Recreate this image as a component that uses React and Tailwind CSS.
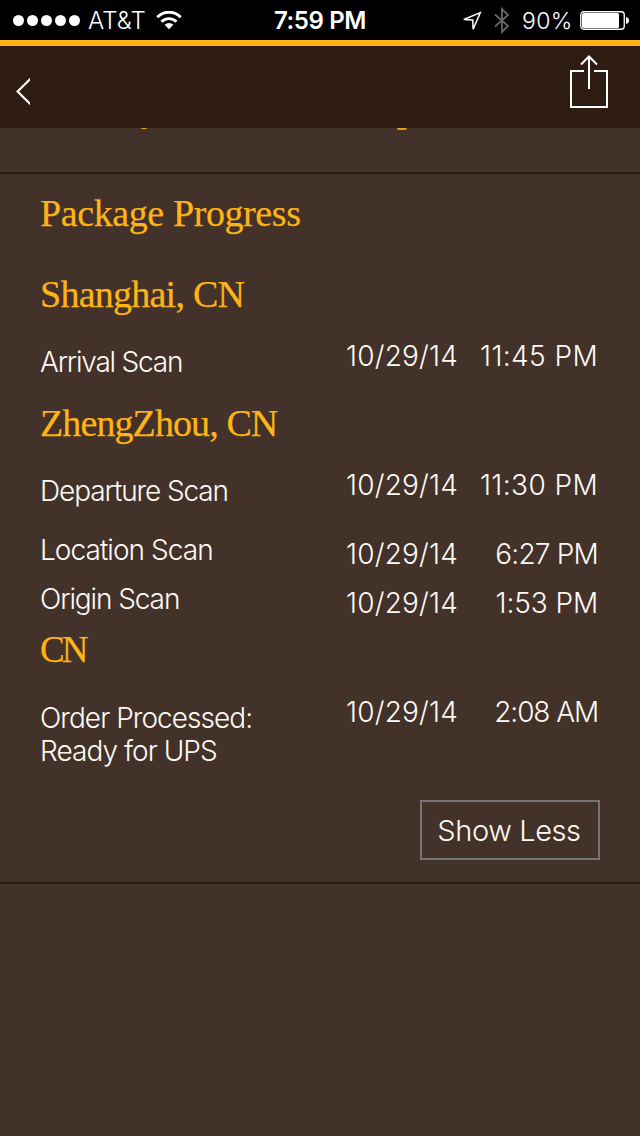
const stops = [
  {
    place: 'Shanghai, CN',
    heading: 'text-[38px] tracking-[-0.75px]',
    scans: [
      {
        label: 'Arrival Scan',
        date: '10/29/14',
        time: '11:45 PM',
        row: 'h-[65px]',
        labelPad: 'pt-1.5 tracking-[-1.2px]',
        datePad: '',
        timeTracking: 'tracking-[0.4px]',
      },
    ],
  },
  {
    place: 'ZhengZhou, CN',
    heading: 'text-[38px] tracking-[-0.9px]',
    scans: [
      {
        label: 'Departure Scan',
        date: '10/29/14',
        time: '11:30 PM',
        row: 'h-[65px]',
        labelPad: 'pt-1.5 tracking-[-1.1px]',
        datePad: '',
        timeTracking: 'tracking-[0.4px]',
      },
      {
        label: 'Location Scan',
        date: '10/29/14',
        time: '6:27 PM',
        row: 'h-[49px]',
        labelPad: 'tracking-[-0.95px]',
        datePad: 'pt-1',
        timeTracking: 'tracking-[-0.8px]',
      },
      {
        label: 'Origin Scan',
        date: '10/29/14',
        time: '1:53 PM',
        row: 'h-[49px]',
        labelPad: 'tracking-[-1.1px]',
        datePad: 'pt-1',
        timeTracking: 'tracking-[-0.1px]',
      },
    ],
  },
  {
    place: 'CN',
    heading: 'text-[37px] tracking-[-3px]',
    scans: [
      {
        label: 'Order Processed: Ready for UPS',
        date: '10/29/14',
        time: '2:08 AM',
        row: 'h-[106px]',
        labelPad: 'pt-1.5 tracking-[-0.95px]',
        datePad: '',
        timeTracking: 'tracking-[-1.1px]',
      },
    ],
  },
];

function StatusBar() {
  return (
    <div className="grid h-10 grid-cols-[1fr_auto_1fr] items-center bg-black font-['Inter',sans-serif] text-[23px] leading-10 text-white">
      <div className="flex items-center pl-[13px]">
        <div className="flex gap-[3px]">
          {[0, 1, 2, 3, 4].map((dot) => (
            <span key={dot} className="size-[11px] rounded-full bg-white" />
          ))}
        </div>
        <span className="ml-2 w-[58px] pt-px text-[24px] font-light tracking-[0.1px]">AT&amp;T</span>
        <svg className="ml-2.5" width="26" height="19" viewBox="0 0 26 19" fill="none">
          <path d="M1.300 6.200a16.500 16.500 0 0 1 23.400 0" stroke="#fff" strokeWidth="3" />
          <path d="M5.500 10.800a10.600 10.600 0 0 1 15 0" stroke="#fff" strokeWidth="2.800" />
          <path d="M13 18.300 8.600 13.800a6.300 6.300 0 0 1 8.800 0z" fill="#fff" />
        </svg>
      </div>
      <span className="pt-px text-[24px] font-semibold tracking-[-0.4px]">7:59 PM</span>
      <div className="flex items-center justify-end pr-[11px]">
        <svg width="20" height="20" viewBox="0 0 20 20" fill="none">
          <path d="M18.300 1.600 1.800 8.500l9 .5.3 9.200z" stroke="#fff" strokeWidth="1.500" />
        </svg>
        <svg className="ml-3" width="16" height="27" viewBox="0 0 16 27" fill="none">
          <path d="M1 7.500 14 19l-6 6V2l6 6L1 19.500" stroke="#686868" strokeWidth="1.800" />
        </svg>
        <span className="ml-3 w-[50px] pt-px font-light tracking-[0.3px] whitespace-nowrap">90%</span>
        <svg className="ml-2" width="49" height="19" viewBox="0 0 49 19">
          <rect
            x=".75"
            y=".75"
            width="43.5"
            height="17.5"
            rx="3"
            fill="none"
            stroke="#fff"
            strokeWidth="1.3"
          />
          <rect x="2" y="2" width="37" height="15" rx="1.5" fill="#fff" />
          <path d="M46 6c2 .3 3 1.600 3 3.500s-1 3.200-3 3.500z" fill="#fff" />
        </svg>
      </div>
    </div>
  );
}

function NavBar() {
  return (
    <header className="flex h-[88px] items-start justify-between border-t-[6px] border-[#ffb415] bg-[#2e1c12] pr-8 pl-4">
      <button aria-label="Back" className="mt-8">
        <svg width="14" height="27" viewBox="0 0 14 27" fill="none">
          <path d="M14.500 .8 1.600 13.500 14.500 26.200" stroke="#fff" strokeWidth="2.200" />
        </svg>
      </button>
      <button aria-label="Share" className="mt-[9px]">
        <svg width="38" height="53" viewBox="0 0 38 53" fill="none" stroke="#fff" strokeWidth="2">
          <path d="M14 16H1v36h36V16H24" />
          <path d="M19 34V1.500M11 9.500l8-8 8 8" />
        </svg>
      </button>
    </header>
  );
}

function ScanRow({ scan }) {
  return (
    <div className={`flex pt-0.5 text-[28px] leading-[33px] font-light text-[#fffaf5] ${scan.row}`}>
      <p className={`w-[306px] pr-16 ${scan.labelPad}`}>{scan.label}</p>
      <p className={`w-28 tracking-[0.2px] whitespace-nowrap ${scan.datePad}`}>{scan.date}</p>
      <p className={`flex-1 pr-0.5 text-right whitespace-nowrap ${scan.datePad} ${scan.timeTracking}`}>
        {scan.time}
      </p>
    </div>
  );
}

export default function App() {
  return (
    <div className="flex h-[1136px] w-[640px] flex-col overflow-hidden bg-[#42322a] font-['Inter',sans-serif]">
      <StatusBar />
      <NavBar />

      {/* tail of the section scrolled under the nav bar */}
      <div className="flex h-[46px] items-start border-b-2 border-[#2e1c12]">
        <span className="ml-[141px] h-px w-1.5 rounded-b-full bg-[#e0a21c]" />
        <span className="ml-[250px] h-0.5 w-[10px] rounded-b-full bg-[#e0a21c]" />
      </div>

      <section className="h-[710px] border-b-2 border-[#2e1c12] px-10 pt-[19px]">
        <h1 className="mb-[41px] font-['Liberation_Serif',serif] text-[38px] leading-10 tracking-[-0.4px] text-[#ffb415] [-webkit-text-stroke:0.25px_#ffb415]">
          Package Progress
        </h1>
        {stops.map((stop) => (
          <div key={stop.place}>
            <h2
              className={`mb-6 font-['Liberation_Serif',serif] leading-10 text-[#ffb415] [-webkit-text-stroke:0.25px_#ffb415] ${stop.heading}`}
            >
              {stop.place}
            </h2>
            {stop.scans.map((scan) => (
              <ScanRow key={scan.label} scan={scan} />
            ))}
          </div>
        ))}
        <div className="flex justify-end">
          <button className="h-[60px] w-[180px] border-2 border-[#757575] pt-0.5 pr-0.5 text-[29px] font-light tracking-[-0.4px] whitespace-nowrap text-[#fffaf5]">
            Show Less
          </button>
        </div>
      </section>
    </div>
  );
}
